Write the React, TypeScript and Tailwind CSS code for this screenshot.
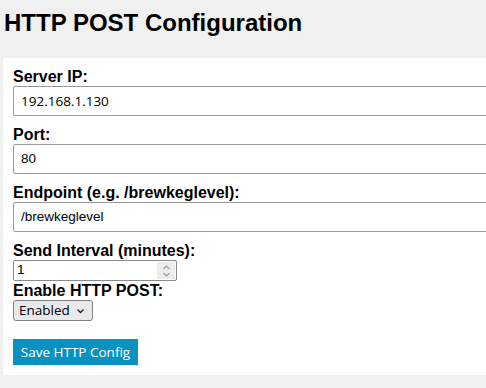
import React from "react";

export default function App() {
  return (
    <div className="min-h-screen w-full overflow-hidden bg-[#f0f0f0] pt-[9px] pl-[3px] text-black" style={{ fontFamily: '"Liberation Sans", Arial, sans-serif' }}>
      <h2 className="ml-[1px] mb-[22px] text-[24px] font-bold leading-[27px]">HTTP POST Configuration</h2>
      <div className="w-[600px] bg-white pt-[10px] pb-[10px] pl-[10px]">
        <label className="block text-[16px] font-bold leading-[18px]">Server IP:</label>
        <div className="mb-[10px] flex h-[30px] w-full items-center rounded-[2px] border border-[#9a9a9a] pl-[7px] text-[13.5px]" style={{ fontFamily: '"Open Sans", sans-serif' }}>
          192.168.1.130
        </div>
        <label className="block text-[16px] font-bold leading-[18px]">Port:</label>
        <div className="mb-[10px] flex h-[30px] w-full items-center rounded-[2px] border border-[#9a9a9a] pl-[7px] text-[13.5px]">
          80
        </div>
        <label className="block text-[16px] font-bold leading-[18px]">Endpoint (e.g. /brewkeglevel):</label>
        <div className="mb-[10px] flex h-[30px] w-full items-center rounded-[2px] border border-[#9a9a9a] pl-[7px] text-[13.5px]">
          /brewkeglevel
        </div>
        <label className="block text-[16px] font-bold leading-[18px]">Send Interval (minutes):</label>
        <div className="flex h-[21px] w-[164px] items-center justify-between rounded-[2px] border border-[#8a8a8a] pl-[3px] pr-[1px] text-[13.5px]">
          <span>1</span>
          <span className="flex h-[17px] w-[18px] flex-col items-center justify-center bg-[#ececec]">
            <svg width="9" height="14" viewBox="0 0 9 14" fill="none" stroke="#9a9a9a" strokeWidth="1.1">
              <path d="M1.5 5 L4.5 2 L7.5 5" />
              <path d="M1.5 9 L4.5 12 L7.5 9" />
            </svg>
          </span>
        </div>
        <label className="block text-[16px] font-bold leading-[19px]">Enable HTTP POST:</label>
        <div className="flex h-[21px] w-[80px] items-center justify-between rounded-[3px] border border-[#808080] bg-[#e9e9ed] pl-[5px] pr-[7px] text-[13.5px]" style={{ fontFamily: '"Open Sans", sans-serif' }}>
          <span>Enabled</span>
          <svg width="9" height="6" viewBox="0 0 9 6" fill="none" stroke="#222" strokeWidth="1.4">
            <path d="M1.5 1.5 L4.5 4.5 L7.5 1.5" />
          </svg>
        </div>
        <div className="mt-[18px] flex h-[26px] w-[125px] items-center justify-center bg-[#0892c2] text-[13.5px] text-white" style={{ fontFamily: '"Open Sans", sans-serif' }}>
          Save HTTP Config
        </div>
      </div>
    </div>
  );
}
